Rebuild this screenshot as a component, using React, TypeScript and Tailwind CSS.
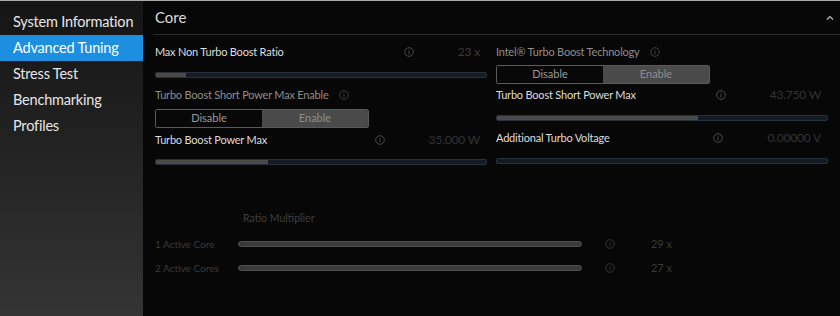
import React from "react";

const font = { fontFamily: 'Lato, "Noto Sans", sans-serif' };

function InfoIcon({ className = "text-[#4a4a4a]" }: { className?: string }) {
  return (
    <svg viewBox="0 0 10 10" className={`h-[10px] w-[10px] shrink-0 ${className}`} fill="none">
      <circle cx="5" cy="5" r="4.3" stroke="currentColor" strokeWidth="1" />
      <rect x="4.5" y="4.2" width="1" height="3.2" fill="currentColor" />
      <rect x="4.5" y="2.5" width="1" height="1" fill="currentColor" />
    </svg>
  );
}

function Slider({ fill }: { fill: number }) {
  return (
    <div className="h-[6px] w-full overflow-hidden rounded-[2px] border border-[#28313c] bg-[#141b24]">
      <div className="h-full bg-[#4a4a4a]" style={{ width: `${fill}%` }} />
    </div>
  );
}

function ValueRow({
  label,
  value,
  valueColor = "text-[#3c3c3c]",
}: {
  label: string;
  value: string;
  valueColor?: string;
}) {
  return (
    <div className="flex h-[18px] items-center text-[11px] tracking-[-0.2px]">
      <span className="flex-1 text-[#dedede]">{label}</span>
      <InfoIcon />
      <span className={`ml-[44px] pr-[7px] text-[12px] ${valueColor}`}>{value}</span>
    </div>
  );
}

function Toggle() {
  return (
    <div className="flex h-[19px] w-[214px] overflow-hidden rounded-[2px] border border-[#5a5a5a] text-[11px]">
      <div className="flex flex-1 items-center justify-center bg-[#080808] text-[#9a9a9a]">Disable</div>
      <div className="flex flex-1 items-center justify-center bg-[#4a4a4a] text-[#8e8e8e]">Enable</div>
    </div>
  );
}

function ToggleLabel({ label }: { label: string }) {
  return (
    <div className="flex h-[18px] items-center text-[11px] tracking-[-0.2px] text-[#8e8e8e]">
      <span>{label}</span>
      <span className="ml-[10px]">
        <InfoIcon className="text-[#3e3e3e]" />
      </span>
    </div>
  );
}

function CoreRow({ label, value }: { label: string; value: string }) {
  return (
    <div className="flex h-[24px] items-center text-[10px] text-[#3a3a3a]">
      <span className="w-[83px]">{label}</span>
      <div className="h-[6px] w-[344px] rounded-[3px] border border-[#4e4e4e] bg-[#3a3a3a]" />
      <span className="ml-[23px]">
        <InfoIcon className="text-[#333]" />
      </span>
      <span className="w-[57px] text-right text-[11px]">{value}</span>
    </div>
  );
}

const menu = ["System Information", "Advanced Tuning", "Stress Test", "Benchmarking", "Profiles"];

export default function App() {
  return (
    <div
      className="flex h-[316px] w-[840px] overflow-hidden border-t border-[#a8a8a8] bg-[#070707]"
      style={font}
    >
      <aside className="flex w-[143px] shrink-0 flex-col bg-gradient-to-b from-[#151515] to-[#343434] pt-[8px]">
        {menu.map((m) => (
          <div
            key={m}
            className={`flex h-[26px] items-center whitespace-nowrap pl-[13px] text-[14.5px] tracking-[-0.2px] ${
              m === "Advanced Tuning" ? "bg-[#1c8fe0] text-white" : "text-[#e6e6e6]"
            }`}
          >
            {m}
          </div>
        ))}
      </aside>

      <main className="flex flex-1 flex-col">
        <div className="ml-[10px] flex h-[34px] items-center justify-between border-b border-[#2c2c2c] pl-[2px] pr-[6px]">
          <span className="text-[15px] text-[#dcdcdc]">Core</span>
          <svg viewBox="0 0 8 6" className="h-[6px] w-[8px] text-[#bdbdbd]" fill="none">
            <path d="M1 4.5 L4 1.5 L7 4.5" stroke="currentColor" strokeWidth="1.2" />
          </svg>
        </div>

        <div className="grid grid-cols-2 gap-x-[9px] pl-[12px] pr-[12px]">
          <div className="flex flex-col">
            <div className="mt-[8px]">
              <ValueRow label="Max Non Turbo Boost Ratio" value="23 x" />
            </div>
            <div className="mt-[11px]">
              <Slider fill={9} />
            </div>
            <div className="mt-[8px]">
              <ToggleLabel label="Turbo Boost Short Power Max Enable" />
            </div>
            <div className="mt-[5px]">
              <Toggle />
            </div>
            <div className="mt-[3px]">
              <ValueRow label="Turbo Boost Power Max" value="35.000 W" valueColor="text-[#333]" />
            </div>
            <div className="mt-[10px]">
              <Slider fill={34} />
            </div>
          </div>

          <div className="flex flex-col">
            <div className="mt-[8px]">
              <ToggleLabel label="Intel® Turbo Boost Technology" />
            </div>
            <div className="mt-[4px]">
              <Toggle />
            </div>
            <div className="mt-[2px]">
              <ValueRow label="Turbo Boost Short Power Max" value="43.750 W" valueColor="text-[#333]" />
            </div>
            <div className="mt-[11px]">
              <Slider fill={61} />
            </div>
            <div className="mt-[8px]">
              <ValueRow label="Additional Turbo Voltage" value="0.00000 V" valueColor="text-[#333]" />
            </div>
            <div className="mt-[11px]">
              <Slider fill={0} />
            </div>
          </div>
        </div>

        <div className="mt-[44px] flex flex-col pl-[12px]">
          <div className="h-[18px] pl-[88px] text-[10.5px] leading-[18px] text-[#3e3e3e]">Ratio Multiplier</div>
          <div className="mt-[5px]">
            <CoreRow label="1 Active Core" value="29 x" />
            <CoreRow label="2 Active Cores" value="27 x" />
          </div>
        </div>
      </main>
    </div>
  );
}
